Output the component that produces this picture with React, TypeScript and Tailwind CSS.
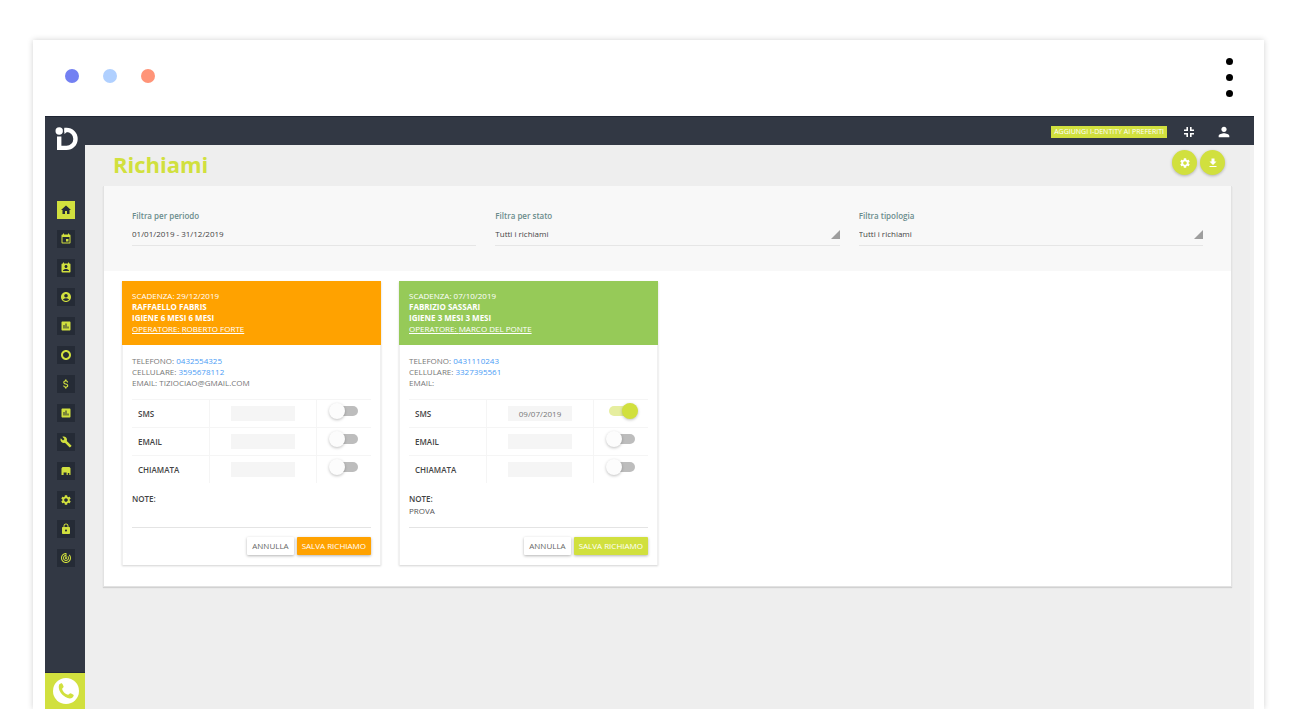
import { useState } from 'react';
import type { ReactNode } from 'react';
import {
  MdAccountCircle,
  MdAssessment,
  MdAttachMoney,
  MdBuild,
  MdEvent,
  MdFileDownload,
  MdHome,
  MdLock,
  MdPermContactCalendar,
  MdPerson,
  MdSettings,
  MdTrackChanges,
  MdTripOrigin,
} from 'react-icons/md';

type Channel = { name: string; date: string; on: boolean };

type Recall = {
  id: string;
  due: string;
  patient: string;
  treatment: string;
  operator: string;
  phone: string;
  mobile: string;
  email: string;
  note: string;
  headerClass: string;
  saveClass: string;
  channels: Channel[];
};

const recalls: Recall[] = [
  {
    id: 'fabris',
    due: '29/12/2019',
    patient: 'RAFFAELLO FABRIS',
    treatment: 'IGIENE 6 MESI 6 MESI',
    operator: 'ROBERTO FORTE',
    phone: '0432554325',
    mobile: '3595678112',
    email: 'TIZIOCIAO@GMAIL.COM',
    note: '',
    headerClass: 'bg-[#ffa200]',
    saveClass: 'bg-[#ffa200]',
    channels: [
      { name: 'SMS', date: '', on: false },
      { name: 'EMAIL', date: '', on: false },
      { name: 'CHIAMATA', date: '', on: false },
    ],
  },
  {
    id: 'sassari',
    due: '07/10/2019',
    patient: 'FABRIZIO SASSARI',
    treatment: 'IGIENE 3 MESI 3 MESI',
    operator: 'MARCO DEL PONTE',
    phone: '0431110243',
    mobile: '3327395561',
    email: '',
    note: 'PROVA',
    headerClass: 'bg-[#96ca58]',
    saveClass: 'bg-[#d1e03e]',
    channels: [
      { name: 'SMS', date: '09/07/2019', on: true },
      { name: 'EMAIL', date: '', on: false },
      { name: 'CHIAMATA', date: '', on: false },
    ],
  },
];

function ShopIcon() {
  return (
    <svg viewBox="0 0 12 12" width="1em" height="1em" fill="currentColor" aria-hidden="true">
      <path d="M2.500 2H9.500L10.500 3.200V10H9.300V8H7.800V10H6.600V7.500H3.600V10H1.500V3.200Z" />
    </svg>
  );
}

const navItems = [
  { label: 'Home', Icon: MdHome },
  { label: 'Agenda', Icon: MdEvent },
  { label: 'Richiami', Icon: MdPermContactCalendar },
  { label: 'Pazienti', Icon: MdAccountCircle },
  { label: 'Report', Icon: MdAssessment },
  { label: 'Analisi', Icon: MdTripOrigin },
  { label: 'Contabilità', Icon: MdAttachMoney },
  { label: 'Statistiche', Icon: MdAssessment },
  { label: 'Strumenti', Icon: MdBuild },
  { label: 'Magazzino', Icon: ShopIcon },
  { label: 'Impostazioni', Icon: MdSettings },
  { label: 'Sicurezza', Icon: MdLock },
  { label: 'Monitoraggio', Icon: MdTrackChanges },
];

function Logo() {
  return (
    <svg viewBox="0 0 24 24" className="size-6" fill="none" aria-hidden="true">
      <circle cx="4.200" cy="4" r="3.700" fill="#fff" />
      <path
        d="M4.200 9.600V20.900H11.500A9 9 0 0 0 11.500 2.900H9.400"
        stroke="#fff"
        strokeWidth="4.400"
      />
      <path d="M9.400 .7V7L12 5Z" fill="#fff" />
    </svg>
  );
}

function ExitFullscreenIcon() {
  return (
    <svg viewBox="0 0 10 10" className="size-[10px]" fill="none" stroke="#fff" strokeWidth="1.6" aria-hidden="true">
      <path d="M0 3.200H3.200V0M6.800 0V3.200H10M10 6.800H6.800V10M3.200 10V6.800H0" />
    </svg>
  );
}

function PhoneBubble() {
  return (
    <svg viewBox="0 0 26 26" className="size-[26px]" aria-hidden="true">
      <circle cx="13" cy="13" r="13" fill="#fff" />
      <path
        d="M6.2 6.6C7 5.6 8.300 5 8.900 5.300C9.600 6.300 10.300 7.500 10.600 8.500C10.700 9.500 9.400 10.100 9.100 10.900C9.800 13.500 12.300 16 15 16.800C15.900 16.600 16.500 15.300 17.500 15.300C18.700 15.700 19.800 16.400 20.700 17.100C20.900 18.100 20 19.300 19 20C13.500 22.500 3.500 13.500 6.200 6.600Z"
        fill="#d1e03e"
      />
    </svg>
  );
}

function Sidebar() {
  return (
    <aside className="flex w-10 shrink-0 flex-col items-center bg-[#323844]">
      <nav className="mt-14 flex flex-col gap-[11px] pl-[2px]">
        {navItems.map(({ label, Icon }, i) => (
          <a
            key={label}
            href="#"
            aria-label={label}
            className={
              i === 0
                ? 'flex size-[18px] items-center justify-center bg-[#d1e03e] text-[12px] text-[#252b38]'
                : 'flex size-[18px] items-center justify-center bg-[#252b36] text-[12px] text-[#d1e03e]'
            }
          >
            <Icon />
          </a>
        ))}
      </nav>
      <a
        href="#"
        aria-label="Chiama assistenza"
        className="mt-auto flex h-[37px] w-full items-center justify-center border-t border-[#252b38] bg-[#d1e03e] pl-[2px]"
      >
        <PhoneBubble />
      </a>
    </aside>
  );
}

function TopBar() {
  return (
    <header className="relative z-10 flex h-[29px] items-center border-t border-[#1f2533] bg-[#323844] pr-[22px] pl-[10px]">
      <a href="#" aria-label="iDentity" className="pt-[15px]">
        <Logo />
      </a>
      <div className="ml-auto flex items-center pt-[2px]">
        <button type="button" className="h-3 bg-[#d1e03e] px-[3px] text-[7px] leading-3 font-medium text-white">
          AGGIUNGI I-DENTITY AI PREFERITI
        </button>
        <button type="button" aria-label="Esci da schermo intero" className="ml-[17px]">
          <ExitFullscreenIcon />
        </button>
        <button type="button" aria-label="Profilo" className="ml-[22px] text-base text-white">
          <MdPerson />
        </button>
      </div>
    </header>
  );
}

function RoundButton({ label, children }: { label: string; children: ReactNode }) {
  return (
    <button
      type="button"
      aria-label={label}
      className="flex size-[25px] items-center justify-center rounded-full bg-[#d1e03e] text-[12px] text-white shadow-[0_1px_3px_rgba(0,0,0,0.25)]"
    >
      {children}
    </button>
  );
}

const fieldClass =
  'col-start-1 row-start-1 h-[22px] w-full appearance-none border-b border-[#e6e6e6] bg-transparent pb-[2px] text-[8px] font-medium text-[#444] outline-none';

const fieldLabelClass = 'block text-[8px] leading-[11px] font-semibold text-[#6a8c8c]';

function SelectFilter({ id, label }: { id: string; label: string }) {
  return (
    <div>
      <label htmlFor={id} className={fieldLabelClass}>
        {label}
      </label>
      <div className="mt-[3px] grid items-center">
        <select id={id} className={fieldClass}>
          <option>Tutti i richiami</option>
        </select>
        <svg
          viewBox="0 0 9 9"
          className="pointer-events-none col-start-1 row-start-1 mb-[2px] size-[9px] justify-self-end"
          aria-hidden="true"
        >
          <path d="M9 0V9H0Z" fill="#9e9e9e" />
        </svg>
      </div>
    </div>
  );
}

function Filters() {
  return (
    <div className="grid grid-cols-3 gap-[19px] bg-[#f8f8f8] px-7 pt-6 pb-[25px]">
      <div>
        <label htmlFor="period" className={fieldLabelClass}>
          Filtra per periodo
        </label>
        <div className="mt-[3px] grid">
          <input id="period" type="text" defaultValue="01/01/2019 - 31/12/2019" className={fieldClass} />
        </div>
      </div>
      <SelectFilter id="status" label="Filtra per stato" />
      <SelectFilter id="kind" label="Filtra tipologia" />
    </div>
  );
}

function Toggle({ label, initial }: { label: string; initial: boolean }) {
  const [on, setOn] = useState(initial);
  return (
    <label className="relative inline-flex h-4 w-[26px] cursor-pointer items-center">
      <input
        type="checkbox"
        aria-label={label}
        checked={on}
        onChange={() => setOn(!on)}
        className="peer sr-only"
      />
      <span className="flex h-[10px] w-full items-center rounded-full bg-[#bdbdbd] peer-checked:justify-end peer-checked:bg-[#e6ee9f] peer-checked:*:bg-[#d1e03e]">
        <span className="-mx-[3px] size-4 rounded-full bg-[#fcfcfc] shadow-[0_1px_3px_rgba(0,0,0,0.25)]" />
      </span>
    </label>
  );
}

function RecallCard({ recall }: { recall: Recall }) {
  return (
    <article className="w-[259px] border-x border-[#f0f0f0] bg-white shadow-[0_1px_2px_rgba(0,0,0,0.18)]">
      <div className={`-mx-px px-[10px] pt-[9px] pb-[11px] text-[8px] leading-[11px] text-white ${recall.headerClass}`}>
        <p className="font-medium">SCADENZA: {recall.due}</p>
        <p className="font-bold">{recall.patient}</p>
        <p className="font-bold">{recall.treatment}</p>
        <a href="#" className="block underline">
          OPERATORE: {recall.operator}
        </a>
      </div>
      <div className="px-[9px] py-[10px]">
        <div className="text-[8px] leading-[11px] text-[#777]">
          <p>
            TELEFONO:{' '}
            <a href={`tel:${recall.phone}`} className="text-[#4a9cf5]">
              {recall.phone}
            </a>
          </p>
          <p>
            CELLULARE:{' '}
            <a href={`tel:${recall.mobile}`} className="text-[#4a9cf5]">
              {recall.mobile}
            </a>
          </p>
          <p>EMAIL: {recall.email}</p>
        </div>
        <table className="mt-[11px] w-full table-fixed border-separate border-spacing-0 text-[8px] text-[#444]">
          <tbody>
            {recall.channels.map((channel) => (
              <tr key={channel.name} className="h-7">
                <th scope="row" className="w-[78px] border-t border-r border-[#f5f5f5] px-[6px] py-0 text-left font-semibold">
                  {channel.name}
                </th>
                <td className="border-t border-r border-[#f5f5f5] p-0 text-center">
                  <input
                    type="text"
                    aria-label={`Data ${channel.name} ${recall.patient}`}
                    defaultValue={channel.date}
                    className="mx-auto block h-[15px] w-16 bg-[#f5f5f5] text-center text-[8px] text-[#777] outline-none"
                  />
                </td>
                <td className="w-[54px] border-t border-[#f5f5f5] pt-0 pr-0 pb-1 pl-[2px] text-center leading-none">
                  <Toggle label={`${channel.name} ${recall.patient}`} initial={channel.on} />
                </td>
              </tr>
            ))}
          </tbody>
        </table>
        <div className="mt-[10px] border-b border-[#e4e4e4] pb-[10px] text-[8px] leading-[12px] text-[#555]">
          <p className="font-semibold text-[#444]">NOTE:</p>
          <p className="min-h-3">{recall.note}</p>
        </div>
        <div className="mt-[9px] flex justify-end gap-[3px]">
          <button
            type="button"
            className="h-[18px] rounded-[1px] bg-white px-[5px] text-[8px] text-[#666] shadow-[0_1px_3px_rgba(0,0,0,0.3)]"
          >
            ANNULLA
          </button>
          <button
            type="button"
            className={`h-[18px] rounded-[1px] px-[5px] text-[8px] text-white shadow-[0_1px_3px_rgba(0,0,0,0.3)] ${recall.saveClass}`}
          >
            SALVA RICHIAMO
          </button>
        </div>
      </div>
    </article>
  );
}

export default function App() {
  return (
    <div className="flex min-h-screen flex-col bg-white pt-10 pr-9 pl-[33px] font-['Open_Sans',sans-serif]">
      <div className="flex grow flex-col bg-white pr-[10px] pl-3 shadow-[0_0_6px_rgba(0,0,0,0.18)]">
        <div className="flex h-[76px] items-start justify-between pr-[21px] pl-5">
          <div className="flex gap-6 pt-[29px]">
            <span className="size-[14px] rounded-full bg-[#7380f2]" />
            <span className="size-[14px] rounded-full bg-[#b0d0ff]" />
            <span className="size-[14px] rounded-full bg-[#ff9478]" />
          </div>
          <div className="flex flex-col gap-[9px] pt-[18px]">
            <span className="size-[7px] rounded-full bg-black" />
            <span className="size-[7px] rounded-full bg-black" />
            <span className="size-[7px] rounded-full bg-black" />
          </div>
        </div>
        <TopBar />
        <div className="flex grow">
          <Sidebar />
          <main className="grow border-r-4 border-[#f1f1f1] bg-[#eee] pr-[18px] pl-[18px]">
            <div className="flex h-[41px] items-start justify-between pr-[7px] pl-[10px]">
              <h1 className="pt-[3px] text-[22px] leading-8 font-bold text-[#d1e03e]">Richiami</h1>
              <div className="flex gap-[3px] pt-[5px]">
                <RoundButton label="Impostazioni richiami">
                  <MdSettings />
                </RoundButton>
                <RoundButton label="Scarica">
                  <MdFileDownload />
                </RoundButton>
              </div>
            </div>
            <section className="border-x border-b border-[#e2e2e2] bg-white shadow-[0_1px_1px_rgba(0,0,0,0.12)]">
              <Filters />
              <div className="flex flex-wrap gap-[18px] px-[18px] pt-[10px] pb-[21px]">
                {recalls.map((recall) => (
                  <RecallCard key={recall.id} recall={recall} />
                ))}
              </div>
            </section>
          </main>
        </div>
      </div>
    </div>
  );
}
